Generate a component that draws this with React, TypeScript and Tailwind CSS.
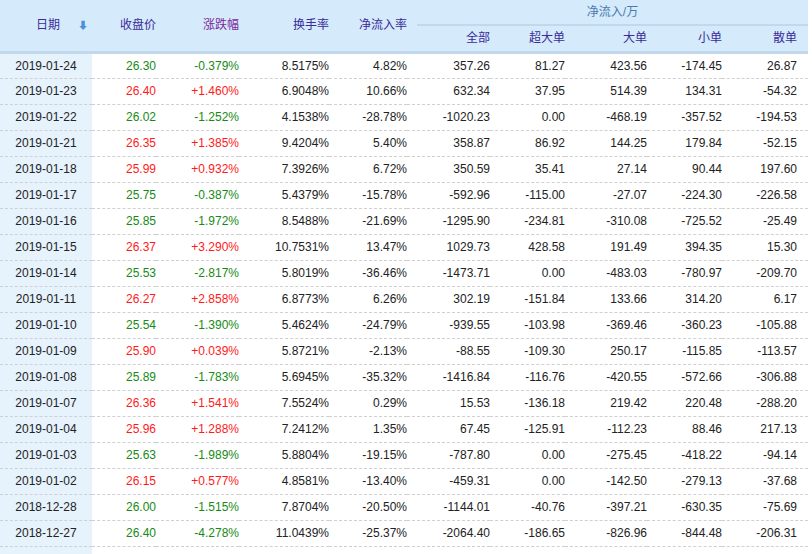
const rows: string[][] = [
["2019-01-24","26.30","-0.379%","8.5175%","4.82%","357.26","81.27","423.56","-174.45","26.87"],
["2019-01-23","26.40","+1.460%","6.9048%","10.66%","632.34","37.95","514.39","134.31","-54.32"],
["2019-01-22","26.02","-1.252%","4.1538%","-28.78%","-1020.23","0.00","-468.19","-357.52","-194.53"],
["2019-01-21","26.35","+1.385%","9.4204%","5.40%","358.87","86.92","144.25","179.84","-52.15"],
["2019-01-18","25.99","+0.932%","7.3926%","6.72%","350.59","35.41","27.14","90.44","197.60"],
["2019-01-17","25.75","-0.387%","5.4379%","-15.78%","-592.96","-115.00","-27.07","-224.30","-226.58"],
["2019-01-16","25.85","-1.972%","8.5488%","-21.69%","-1295.90","-234.81","-310.08","-725.52","-25.49"],
["2019-01-15","26.37","+3.290%","10.7531%","13.47%","1029.73","428.58","191.49","394.35","15.30"],
["2019-01-14","25.53","-2.817%","5.8019%","-36.46%","-1473.71","0.00","-483.03","-780.97","-209.70"],
["2019-01-11","26.27","+2.858%","6.8773%","6.26%","302.19","-151.84","133.66","314.20","6.17"],
["2019-01-10","25.54","-1.390%","5.4624%","-24.79%","-939.55","-103.98","-369.46","-360.23","-105.88"],
["2019-01-09","25.90","+0.039%","5.8721%","-2.13%","-88.55","-109.30","250.17","-115.85","-113.57"],
["2019-01-08","25.89","-1.783%","5.6945%","-35.32%","-1416.84","-116.76","-420.55","-572.66","-306.88"],
["2019-01-07","26.36","+1.541%","7.5524%","0.29%","15.53","-136.18","219.42","220.48","-288.20"],
["2019-01-04","25.96","+1.288%","7.2412%","1.35%","67.45","-125.91","-112.23","88.46","217.13"],
["2019-01-03","25.63","-1.989%","5.8804%","-19.15%","-787.80","0.00","-275.45","-418.22","-94.14"],
["2019-01-02","26.15","+0.577%","4.8581%","-13.40%","-459.31","0.00","-142.50","-279.13","-37.68"],
["2018-12-28","26.00","-1.515%","7.8704%","-20.50%","-1144.01","-40.76","-397.21","-630.35","-75.69"],
["2018-12-27","26.40","-4.278%","11.0439%","-25.37%","-2064.40","-186.65","-826.96","-844.48","-206.31"],
];
const widths = [92,64,83,90,78,83,75,82,75,86];

export default function App() {
  return (
    <div className="w-[812px] h-[554px] overflow-hidden bg-white text-[12px] text-[#222]" style={{fontFamily:'"Liberation Sans","Noto Sans CJK SC",sans-serif'}}>
      <table className="border-collapse table-fixed w-[808px]">
        <colgroup>{widths.map((w,i)=><col key={i} style={{width:w}}/>)}</colgroup>
        <thead className="bg-[#d5eafa] text-[#3a2a9a]">
          <tr className="h-[26px]">
            <th rowSpan={2} className="font-normal border-b-[3px] border-[#c2d8ec]">
              <div className="flex items-center pl-[36px] pr-[4px]"><span>日期</span><span className="ml-auto text-[#4a90d9] text-[10px]">⬇</span></div>
            </th>
            <th rowSpan={2} className="font-normal text-right border-b-[3px] border-[#c2d8ec]">收盘价</th>
            <th rowSpan={2} className="font-normal text-right text-[#7a2a9a] border-b-[3px] border-[#c2d8ec]">涨跌幅</th>
            <th rowSpan={2} className="font-normal text-right border-b-[3px] border-[#c2d8ec]">换手率</th>
            <th rowSpan={2} className="font-normal text-right border-b-[3px] border-[#c2d8ec]">净流入率</th>
            <th colSpan={5} className="font-normal text-center text-[#4a7ab0]"><div className="ml-[10px] border-b-2 border-[#c2d8ec] h-[26px] leading-[24px]">净流入/万</div></th>
          </tr>
          <tr className="h-[26px]">
            {["全部","超大单","大单","小单","散单"].map((h,i)=><th key={h} className={`font-normal text-right border-b-[3px] border-[#c2d8ec] ${i===4?"pr-[11px]":""}`}>{h}</th>)}
          </tr>
        </thead>
        <tbody>
          {rows.map(r=>{
            const up = r[2].startsWith("+");
            const c = up ? "text-[#ff1a1a]" : "text-[#168a16]";
            return (
              <tr key={r[0]} className="h-[26px] border-b border-dashed border-[#d0d0d0]">
                <td className="bg-[#e6f2fc] text-center">{r[0]}</td>
                <td className={`text-right ${c}`}>{r[1]}</td>
                <td className={`text-right ${c}`}>{r[2]}</td>
                {r.slice(3).map((v,i)=><td key={i} className={`text-right ${i===6?"pr-[11px]":""}`}>{v}</td>)}
              </tr>
            );
          })}
          <tr className="h-[26px]"><td className="bg-[#e6f2fc]"></td><td colSpan={9}></td></tr>
        </tbody>
      </table>
    </div>
  );
}
